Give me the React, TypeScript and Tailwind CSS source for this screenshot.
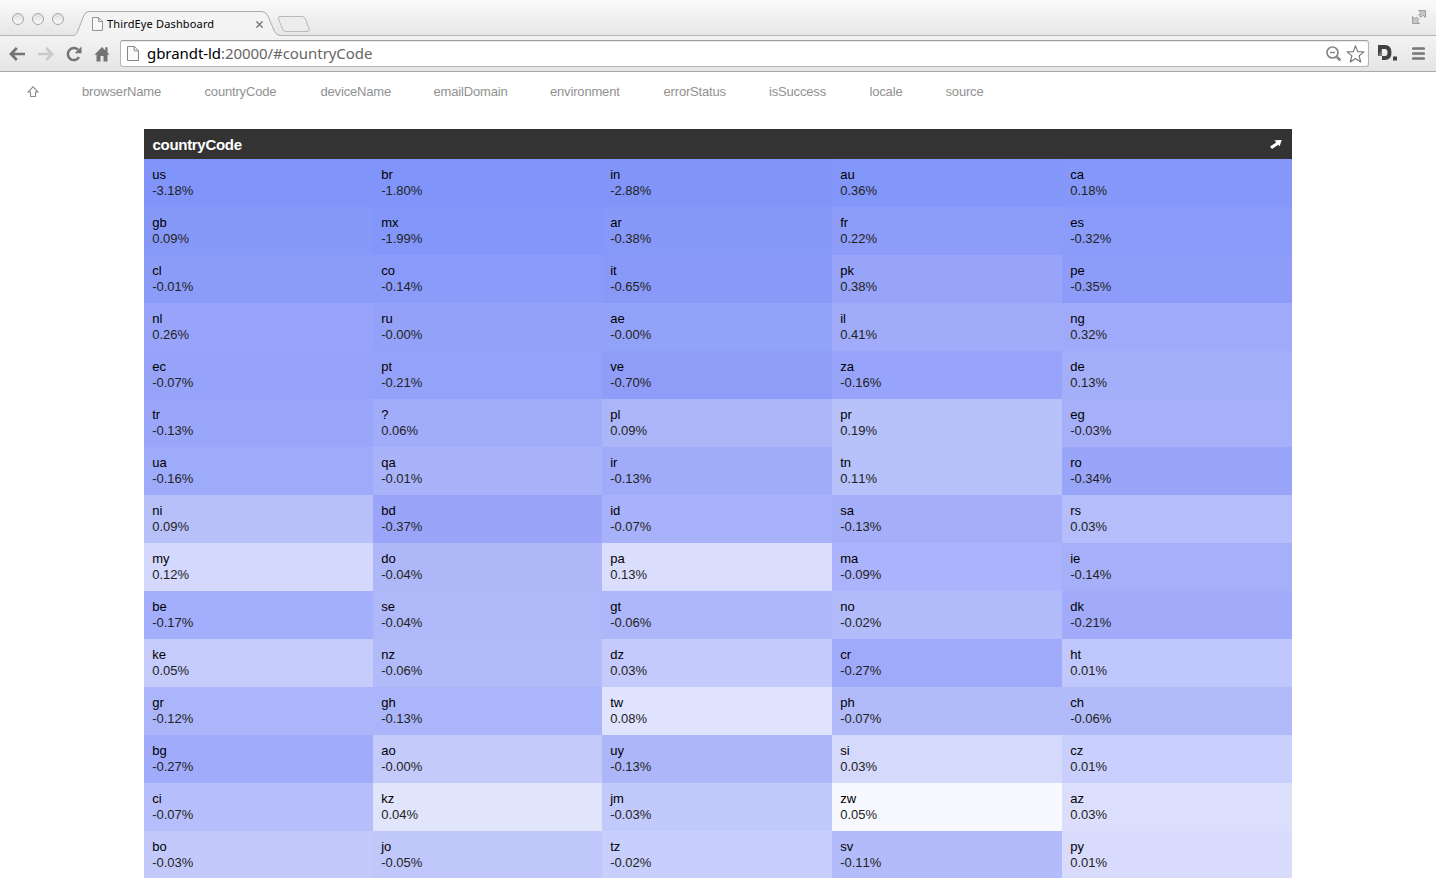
import React from "react";

type Cell = [code: string, change: string, tone: string];

const cells: Cell[] = [
  ["us", "-3.18%", "bg-[#8094f9]"], ["br", "-1.80%", "bg-[#8094f9]"], ["in", "-2.88%", "bg-[#8195f9]"], ["au", "0.36%", "bg-[#8396f9]"], ["ca", "0.18%", "bg-[#8598f9]"],
  ["gb", "0.09%", "bg-[#8799f8]"], ["mx", "-1.99%", "bg-[#8396f9]"], ["ar", "-0.38%", "bg-[#8799f8]"], ["fr", "0.22%", "bg-[#8c9cf8]"], ["es", "-0.32%", "bg-[#8a9bf9]"],
  ["cl", "-0.01%", "bg-[#8b9cf8]"], ["co", "-0.14%", "bg-[#8a9bf9]"], ["it", "-0.65%", "bg-[#8999f8]"], ["pk", "0.38%", "bg-[#97a4f8]"], ["pe", "-0.35%", "bg-[#8d9cf8]"],
  ["nl", "0.26%", "bg-[#98a4fa]"], ["ru", "-0.00%", "bg-[#93a1f9]"], ["ae", "-0.00%", "bg-[#93a2f9]"], ["il", "0.41%", "bg-[#a0abfa]"], ["ng", "0.32%", "bg-[#9faafa]"],
  ["ec", "-0.07%", "bg-[#96a3f9]"], ["pt", "-0.21%", "bg-[#95a2f9]"], ["ve", "-0.70%", "bg-[#8f9df8]"], ["za", "-0.16%", "bg-[#98a4fa]"], ["de", "0.13%", "bg-[#a4affa]"],
  ["tr", "-0.13%", "bg-[#9aa6f9]"], ["?", "0.06%", "bg-[#a1acfa]"], ["pl", "0.09%", "bg-[#abb6f9]"], ["pr", "0.19%", "bg-[#b8c2fa]"], ["eg", "-0.03%", "bg-[#a6b0f9]"],
  ["ua", "-0.16%", "bg-[#9eaafa]"], ["qa", "-0.01%", "bg-[#a9b3fa]"], ["ir", "-0.13%", "bg-[#a0abfa]"], ["tn", "0.11%", "bg-[#b7c1fa]"], ["ro", "-0.34%", "bg-[#99a5f8]"],
  ["ni", "0.09%", "bg-[#b7c0f9]"], ["bd", "-0.37%", "bg-[#9aa5fa]"], ["id", "-0.07%", "bg-[#a8b2fa]"], ["sa", "-0.13%", "bg-[#a4aef9]"], ["rs", "0.03%", "bg-[#b5bdfb]"],
  ["my", "0.12%", "bg-[#d4d8fd]"], ["do", "-0.04%", "bg-[#aeb7f8]"], ["pa", "0.13%", "bg-[#dadefc]"], ["ma", "-0.09%", "bg-[#aab3fb]"], ["ie", "-0.14%", "bg-[#a6b0f9]"],
  ["be", "-0.17%", "bg-[#a3aefc]"], ["se", "-0.04%", "bg-[#afb8f9]"], ["gt", "-0.06%", "bg-[#aeb7f9]"], ["no", "-0.02%", "bg-[#b3bcfa]"], ["dk", "-0.21%", "bg-[#a1abfa]"],
  ["ke", "0.05%", "bg-[#c5cbfb]"], ["nz", "-0.06%", "bg-[#b1bbfa]"], ["dz", "0.03%", "bg-[#c4cafb]"], ["cr", "-0.27%", "bg-[#a0aafa]"], ["ht", "0.01%", "bg-[#c0c7fc]"],
  ["gr", "-0.12%", "bg-[#abb5fa]"], ["gh", "-0.13%", "bg-[#abb5fa]"], ["tw", "0.08%", "bg-[#dfe3fe]"], ["ph", "-0.07%", "bg-[#b2bbfa]"], ["ch", "-0.06%", "bg-[#b2bbf9]"],
  ["bg", "-0.27%", "bg-[#a1abfb]"], ["ao", "-0.00%", "bg-[#c4cafa]"], ["uy", "-0.13%", "bg-[#adb6f9]"], ["si", "0.03%", "bg-[#d5d9fc]"], ["cz", "0.01%", "bg-[#c9d0fd]"],
  ["ci", "-0.07%", "bg-[#b6bffb]"], ["kz", "0.04%", "bg-[#e1e5fc]"], ["jm", "-0.03%", "bg-[#c2c9fb]"], ["zw", "0.05%", "bg-[#f7f9fe]"], ["az", "0.03%", "bg-[#dbdffc]"],
  ["bo", "-0.03%", "bg-[#c3cafb]"], ["jo", "-0.05%", "bg-[#bfc7fb]"], ["tz", "-0.02%", "bg-[#c8cffc]"], ["sv", "-0.11%", "bg-[#b3bbfa]"], ["py", "0.01%", "bg-[#d8dbfb]"],
];

const dimensions: [name: string, width: string][] = [
  ["browserName", "w-[122.5px]"],
  ["countryCode", "w-[116px]"],
  ["deviceName", "w-[113px]"],
  ["emailDomain", "w-[116.5px]"],
  ["environment", "w-[113.5px]"],
  ["errorStatus", "w-[105.5px]"],
  ["isSuccess", "w-[100.5px]"],
  ["locale", "w-[76px]"],
  ["source", "w-[60px]"],
];

function PageIcon({ className }: { className: string }) {
  return (
    <svg className={className} viewBox="0 0 12 15" fill="none" stroke="#858585">
      <path d="M.5.5h6.8l4.2 4.2v9.8H.5z" fill="#fafafa" />
      <path d="M7.2.8v4h4" />
    </svg>
  );
}

function TitleBar() {
  return (
    <div className="flex h-9 items-start bg-linear-to-b from-[#fafafa] to-[#e6e6e6] shadow-[inset_0_-1px_0_#b4b4b4]">
      <div className="flex gap-2 pt-[13px] pl-3">
        {[0, 1, 2].map((i) => (
          <span key={i} className="size-3 rounded-full border border-[#a6a6a6] bg-linear-to-b from-[#dedede] to-[#fafafa]" />
        ))}
      </div>
      <div className="relative ml-[8px] h-9 w-[210px]">
        <svg className="absolute inset-0 h-9 w-[210px]" viewBox="0 0 210 36">
          <path d="M0 35.5C4 35.5 4.500 34 6 30.500L11.500 16.500Q13.300 11.500 17 11.500H190Q194 11.500 196 16L202.500 31.500Q204 35.500 209 35.500V36H0z" fill="#f3f3f3" />
          <path d="M0 35.500C4 35.500 4.500 34 6 30.500L11.500 16.500Q13.300 11.500 17 11.500H190Q194 11.500 196 16L202.500 31.500Q204 35.500 209 35.500" fill="none" stroke="#acacac" />
        </svg>
        <div className="relative flex h-9 items-center pt-3 pl-[20px]">
          <PageIcon className="h-[14px] w-[11px]" />
          <span className="ml-1 w-[149px] font-['Noto_Sans','Open_Sans',sans-serif] text-[11px] leading-4 tracking-[0.15px] whitespace-nowrap text-black">ThirdEye Dashboard</span>
          <svg className="size-[7px]" viewBox="0 0 7 7" stroke="#777" strokeWidth="1.4">
            <path d="M.4.400l6.200 6.200M6.600.400.400 6.600" />
          </svg>
        </div>
      </div>
      <svg className="mt-[15px] -ml-[5px] h-[18px] w-[34px]" viewBox="0 0 34 18">
        <path d="M3 1.500H25Q27.500 1.500 28.500 4L32 13.500Q33 16.500 30 16.500H9Q6.500 16.500 5.500 14L1.500 4Q.7 1.500 3 1.500z" fill="#ececec" stroke="#b9b9b9" />
      </svg>
      <svg className="mt-[10px] mr-[10px] ml-auto size-[14px]" viewBox="0 0 14 14" fill="#c6c6c6" stroke="#999" strokeWidth=".9">
        <path d="M6.500.500h7v7l-2.300-2.300-2.200 2.200-2.400-2.400L8.800 2.800zM7.500 13.500h-7v-7l2.300 2.300L4.500 7.100l2.400 2.400-1.700 1.700z" />
      </svg>
    </div>
  );
}

function Toolbar() {
  return (
    <div className="flex h-9 items-center border-b border-[#a9a9a9] bg-linear-to-b from-[#f3f3f3] to-[#e5e5e5]">
      <svg className="ml-[9px] h-[14px] w-4" viewBox="0 0 16 14" fill="none" stroke="#737373" strokeWidth="2.700">
        <path d="M7.800 1 2 7l5.800 6M2 7h14" />
      </svg>
      <svg className="ml-[13px] h-[14px] w-4" viewBox="0 0 16 14" fill="none" stroke="#cacaca" strokeWidth="2.700">
        <path d="M8.200 1 14 7l-5.800 6M14 7H0" />
      </svg>
      <svg className="ml-[12px] h-4 w-4" viewBox="0 0 16 16">
        <path d="M13 11.200A6 6 0 1 1 12 3.700" fill="none" stroke="#737373" strokeWidth="2.500" />
        <path d="M15.500.500v6.800H8.700z" fill="#737373" />
      </svg>
      <svg className="ml-[12px] h-4 w-4" viewBox="0 0 16 16" fill="#737373">
        <path d="M8 1 .5 8.700h2V15.500h4V10h3v5.500h4V8.700h2L13.500 6.500V1.200h-2.200v3.200z" />
      </svg>
      <div className="ml-[10px] flex h-[27px] w-[1249px] items-center rounded-[3px] border border-[#b5b5b5] border-t-[#9d9d9d] bg-white pl-[6px] shadow-[inset_0_1px_1px_#e8e8e8]">
        <PageIcon className="h-[15px] w-[12px]" />
        <span className="mb-[2px] ml-2 font-['Noto_Sans','Open_Sans',sans-serif] text-[15px] leading-5 tracking-[-0.06px] whitespace-nowrap text-[#666]">
          <span className="text-black">gbrandt-ld</span>:20000/#countryCode
        </span>
        <svg className="ml-auto h-[15px] w-[15px]" viewBox="0 0 15 15" fill="none" stroke="#858585">
          <circle cx="6.500" cy="6.500" r="5.500" strokeWidth="1.700" />
          <path d="M4 6.500h5" strokeWidth="1.400" />
          <path d="m10.800 10.800 3.600 3.600" strokeWidth="2.600" />
        </svg>
        <svg className="mr-[3px] ml-[5px] h-[18px] w-[19px]" viewBox="0 0 19 18" fill="#fff" stroke="#777" strokeWidth="1.200" strokeLinejoin="round">
          <path d="m9.500.900 2.200 5.700 6.200.3-4.800 4 1.600 6.100-5.200-3.400-5.200 3.400 1.600-6.100-4.800-4 6.200-.3z" />
        </svg>
      </div>
      <svg className="mb-[1px] ml-[9px] h-4 w-[19px]" viewBox="0 0 19 16">
        <path d="M0 0H7Q13.500 0 13.500 7.500T7 15H4V11H7Q9.500 11 9.500 7.500T7 4H4V11H0z" fill="#414141" />
        <path d="M4 4v7H0z" fill="#777" />
        <path d="M15 11.500h4v4h-4z" fill="#414141" />
      </svg>
      <svg className="ml-[15px] h-[13px] w-[13px]" viewBox="0 0 13 13" stroke="#777" strokeWidth="2.700" strokeLinecap="round">
        <path d="M1.300 1.500h10.400M1.300 6.500h10.400M1.300 11.500h10.400" />
      </svg>
    </div>
  );
}

function DimensionNav() {
  return (
    <nav className="flex h-[57px] items-start pt-[11px] pl-[27px] text-[13px] leading-[18px] tracking-[-0.17px] text-[#919191]">
      <svg className="mt-[3px] mr-[43px] h-[12px] w-[12px]" viewBox="0 0 12 12" fill="none" stroke="#8c8c8c" strokeWidth="1.100">
        <path d="M6 .8 1 6h2.500v4.500h5V6H11z" />
      </svg>
      {dimensions.map(([name, width]) => (
        <a key={name} className={`${width} shrink-0`}>{name}</a>
      ))}
    </nav>
  );
}

export default function App() {
  return (
    <div className="h-[878px] w-[1436px] overflow-hidden bg-white font-['Liberation_Sans',Arial,sans-serif]">
      <TitleBar />
      <Toolbar />
      <DimensionNav />
      <main className="mx-auto w-[1148px]">
        <header className="flex h-[30px] items-center justify-between bg-[#333] pr-[10px] pl-[8.500px] text-white">
          <h1 className="pt-[2px] text-[15px] leading-5 font-bold tracking-[-0.3px]">countryCode</h1>
          <svg className="h-[9px] w-[12px]" viewBox="0 0 12 9" fill="#fff">
            <path d="M4.500.300 11.800 0 9.600 6.300 8.200 4.800 2 9 0 6.500 6.200 2.500z" />
          </svg>
        </header>
        <div className="grid grid-cols-[229px_229px_230px_230px_230px]">
          {cells.map(([code, change, tone]) => (
            <div key={code} className={`${tone} h-12 pt-2 pl-[8.200px] text-[13px] leading-4 [font-kerning:none]`}>
              <div className="text-black">{code}</div>
              <div className="text-[#222]">{change}</div>
            </div>
          ))}
        </div>
      </main>
    </div>
  );
}
